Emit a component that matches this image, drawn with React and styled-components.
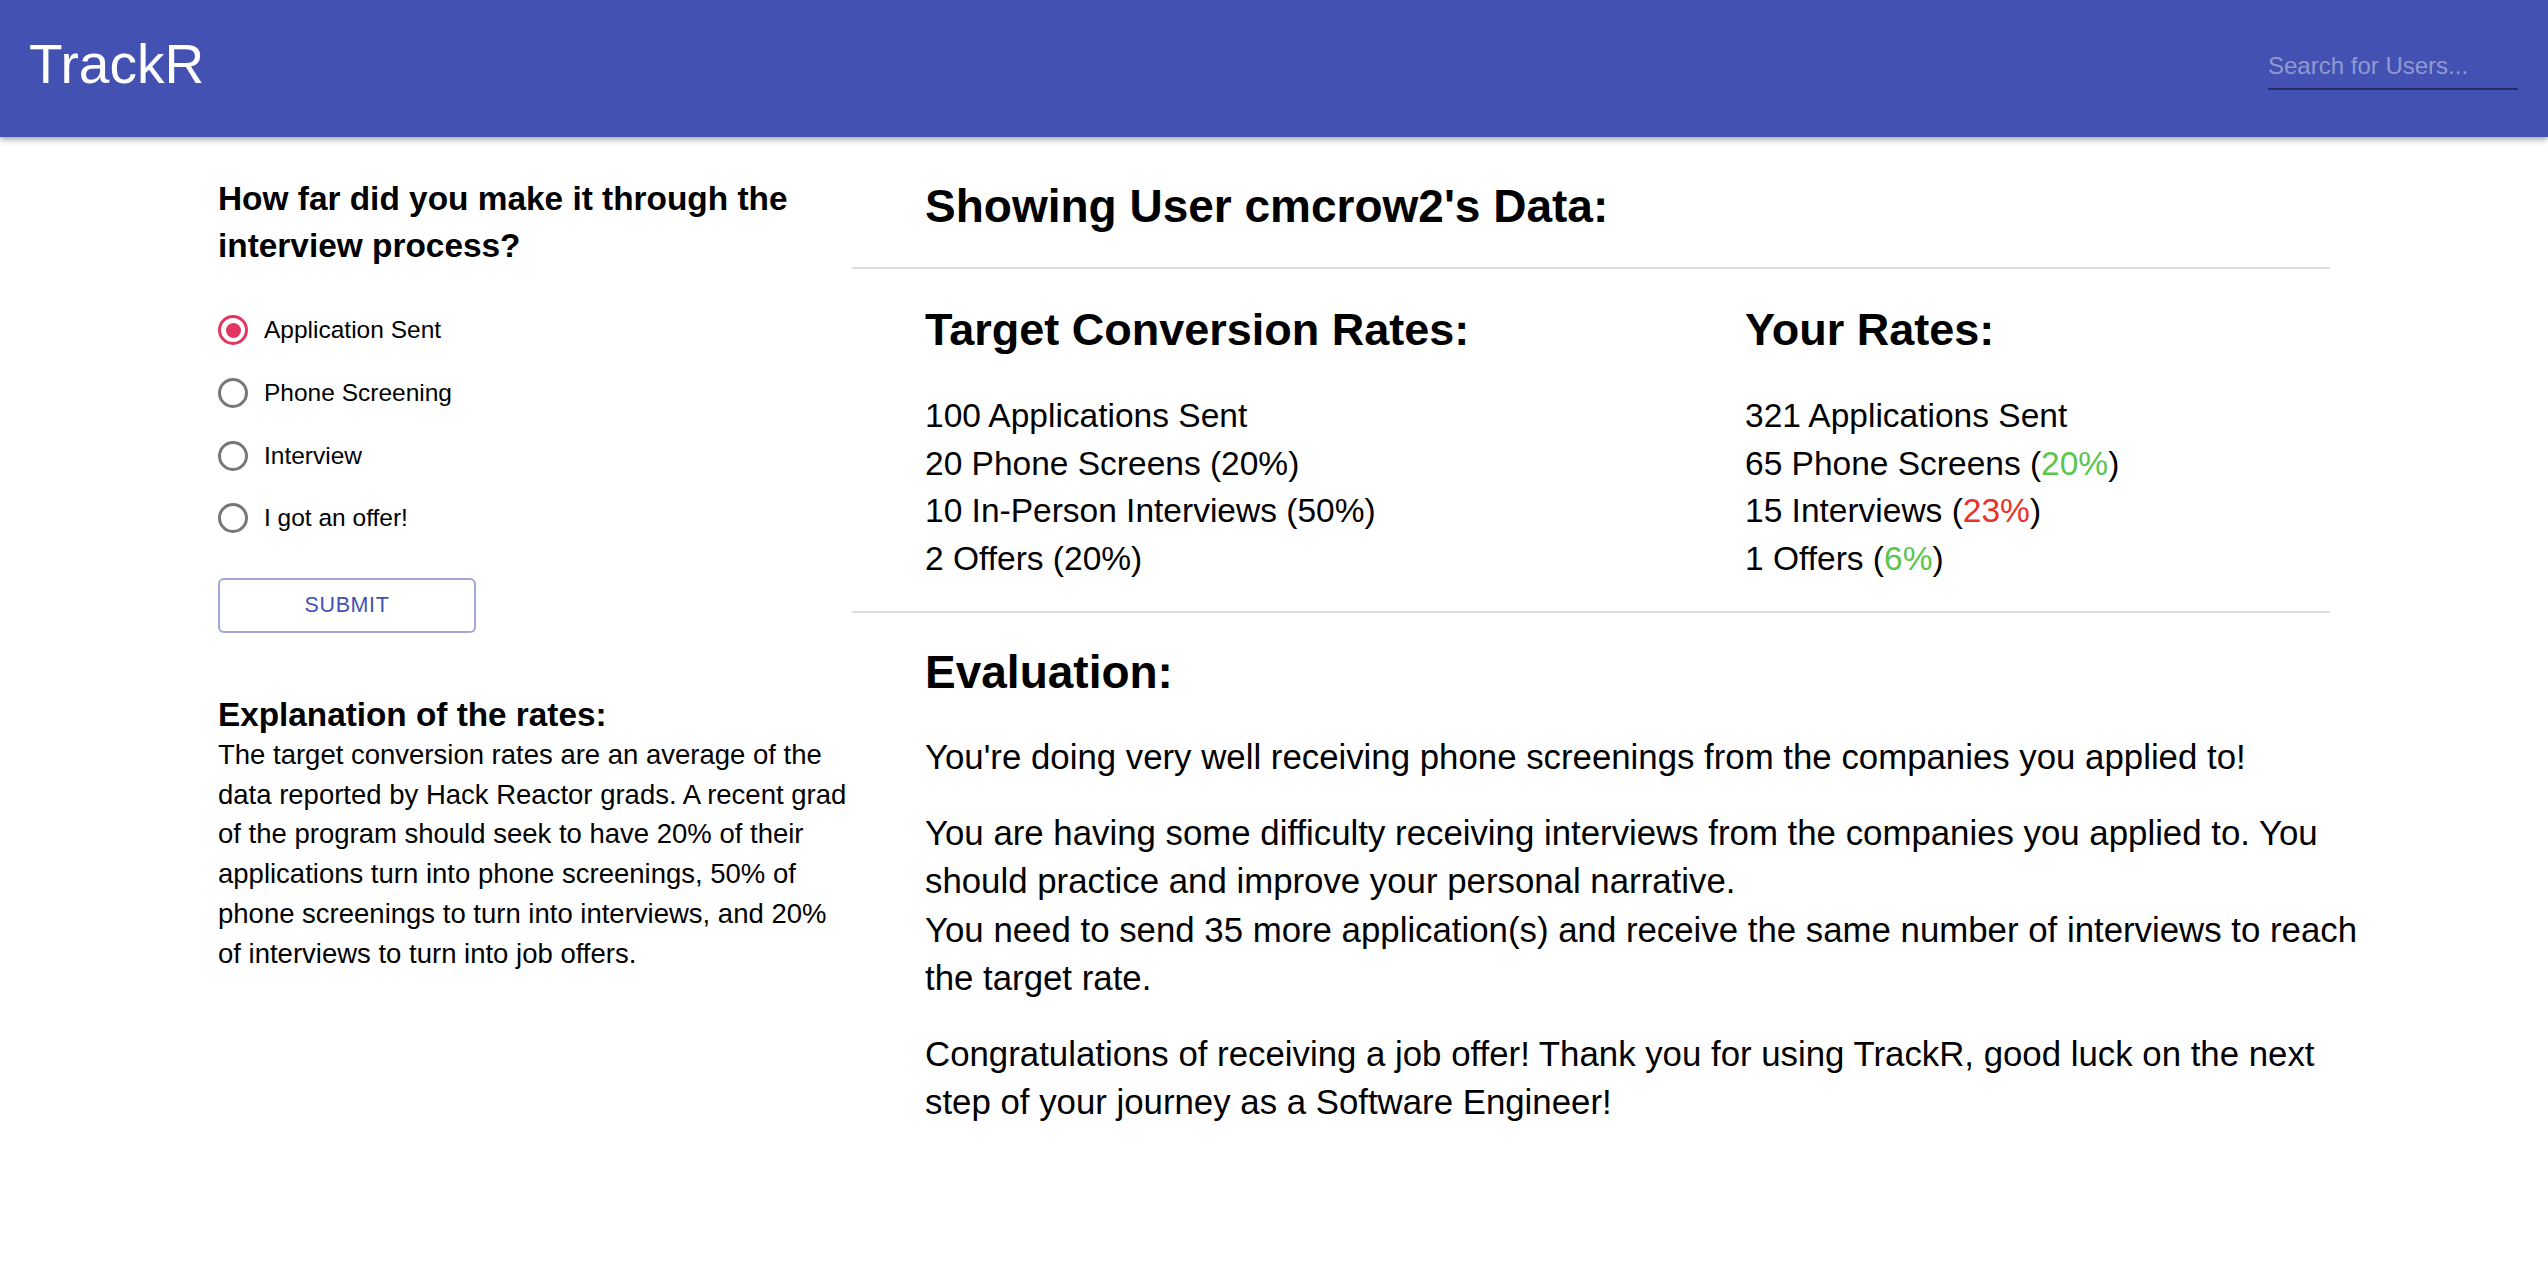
import { useState } from 'react';
import styled, { createGlobalStyle } from 'styled-components';

const GlobalStyle = createGlobalStyle`
  * {
    box-sizing: border-box;
  }
  body {
    margin: 0;
    background: #fff;
    color: #000;
    font-family: "Liberation Sans", Arial, Helvetica, sans-serif;
  }
`;

const AppBar = styled.header`
  position: relative;
  z-index: 1;
  height: 137px;
  display: flex;
  align-items: center;
  justify-content: space-between;
  padding: 0 30px 0 29px;
  background: #4352b2;
  box-shadow: 0 2px 4px -1px rgba(0, 0, 0, 0.2), 0 4px 5px 0 rgba(0, 0, 0, 0.14),
    0 1px 10px 0 rgba(0, 0, 0, 0.12);
`;

const Logo = styled.h1`
  margin: 0 0 9px;
  font-size: 55px;
  font-weight: 400;
  color: #fff;
`;

const SearchInput = styled.input`
  width: 250px;
  margin-top: 4px;
  padding: 0 0 8px;
  border: 0;
  border-bottom: 2px solid rgba(0, 0, 0, 0.42);
  background: transparent;
  font-family: inherit;
  font-size: 24px;
  line-height: 28px;
  color: #fff;
  outline: none;

  &::placeholder {
    color: rgba(255, 255, 255, 0.42);
  }
`;

const Main = styled.main`
  width: 2112px;
  margin: 0 auto;
  display: flex;
`;

const Sidebar = styled.aside`
  width: 634px;
  flex: none;
  padding-top: 38px;
`;

const Question = styled.h2`
  margin: 0;
  font-size: 33.4px;
  font-weight: 700;
  line-height: 47px;
`;

const RadioGroup = styled.div`
  display: flex;
  flex-direction: column;
  margin-top: 30px;
`;

const RadioRow = styled.label`
  height: 62.7px;
  display: flex;
  align-items: center;
  gap: 16px;
  font-size: 24.5px;
  cursor: pointer;
`;

const RadioCircle = styled.span`
  width: 30px;
  height: 30px;
  flex: none;
  display: flex;
  align-items: center;
  justify-content: center;
  border-radius: 50%;
  border: 3px solid ${({ $checked }) => ($checked ? '#e2355f' : '#777')};

  &::after {
    content: '';
    width: 15px;
    height: 15px;
    border-radius: 50%;
    background: ${({ $checked }) => ($checked ? '#e2355f' : 'transparent')};
  }
`;

const HiddenRadio = styled.input`
  display: none;
`;

const SubmitBtn = styled.button`
  width: 258px;
  height: 55px;
  margin-top: 28px;
  border: 2px solid rgba(67, 82, 178, 0.5);
  border-radius: 6px;
  background: #fff;
  color: #4352b2;
  font-family: inherit;
  font-size: 21.5px;
  letter-spacing: 0.6px;
  text-transform: uppercase;
  cursor: pointer;
`;

const SideTitle = styled.h3`
  margin: 62px 0 0;
  font-size: 33.3px;
  font-weight: 700;
  line-height: 40px;
`;

const SideText = styled.p`
  margin: 0;
  font-size: 27.5px;
  line-height: 39.8px;
`;

const Panel = styled.section`
  flex: 1;
  min-width: 0;
`;

const PanelSection = styled.div`
  padding: ${({ $pad }) => $pad};
`;

const Divider = styled.hr`
  margin: 0;
  border: 0;
  height: 2px;
  background: #e0e0e0;
`;

const BigTitle = styled.h2`
  margin: 0;
  font-size: ${({ $size }) => $size || '46px'};
  font-weight: 700;
  line-height: 55px;
`;

const RatesGrid = styled.div`
  display: grid;
  grid-template-columns: 820px 1fr;
`;

const RateList = styled.ul`
  list-style: none;
  margin: 35px 0 0;
  padding: 0;
  font-size: 33.5px;
  line-height: 47.5px;
`;

const Pct = styled.span`
  color: ${({ $good }) => ($good ? '#5bc54e' : '#e8332a')};
`;

const EvalText = styled.div`
  width: 1445px;
  margin-top: 33px;
  font-size: 34.8px;
  line-height: 48.5px;
`;

const EvalPara = styled.p`
  margin: 0 0 27px;
`;

const stages = ['Application Sent', 'Phone Screening', 'Interview', 'I got an offer!'];

const target = [
  '100 Applications Sent',
  '20 Phone Screens (20%)',
  '10 In-Person Interviews (50%)',
  '2 Offers (20%)',
];

const yours = [
  { text: '321 Applications Sent' },
  { text: '65 Phone Screens', pct: '20%', good: true },
  { text: '15 Interviews', pct: '23%', good: false },
  { text: '1 Offers', pct: '6%', good: true },
];

const App = () => {
  const [stage, setStage] = useState(stages[0]);

  return (
    <>
      <GlobalStyle />
      <AppBar>
        <Logo>TrackR</Logo>
        <SearchInput type='text' placeholder='Search for Users...' />
      </AppBar>
      <Main>
        <Sidebar>
          <Question>How far did you make it through the interview process?</Question>
          <RadioGroup>
            {stages.map((s) => (
              <RadioRow key={s}>
                <HiddenRadio
                  type='radio'
                  name='stage'
                  value={s}
                  checked={stage === s}
                  onChange={() => setStage(s)}
                />
                <RadioCircle $checked={stage === s} />
                {s}
              </RadioRow>
            ))}
          </RadioGroup>
          <SubmitBtn>Submit</SubmitBtn>
          <SideTitle>Explanation of the rates:</SideTitle>
          <SideText>
            The target conversion rates are an average of the data reported by Hack Reactor grads. A
            recent grad of the program should seek to have 20% of their applications turn into phone
            screenings, 50% of phone screenings to turn into interviews, and 20% of interviews to
            turn into job offers.
          </SideText>
        </Sidebar>
        <Panel>
          <PanelSection $pad='42px 0 33px 73px'>
            <BigTitle>Showing User cmcrow2's Data:</BigTitle>
          </PanelSection>
          <Divider />
          <PanelSection $pad='33px 0 29px 73px'>
            <RatesGrid>
              <div>
                <BigTitle $size='45px'>Target Conversion Rates:</BigTitle>
                <RateList>
                  {target.map((t) => (
                    <li key={t}>{t}</li>
                  ))}
                </RateList>
              </div>
              <div>
                <BigTitle $size='45px'>Your Rates:</BigTitle>
                <RateList>
                  {yours.map(({ text, pct, good }) => (
                    <li key={text}>
                      {text}
                      {pct && (
                        <>
                          {' ('}
                          <Pct $good={good}>{pct}</Pct>)
                        </>
                      )}
                    </li>
                  ))}
                </RateList>
              </div>
            </RatesGrid>
          </PanelSection>
          <Divider />
          <PanelSection $pad='32px 0 40px 73px'>
            <BigTitle>Evaluation:</BigTitle>
            <EvalText>
              <EvalPara>You're doing very well receiving phone screenings from the companies you applied to!</EvalPara>
              <EvalPara>
                You are having some difficulty receiving interviews from the companies you applied to. You
                should practice and improve your personal narrative.
                <br />
                You need to send 35 more application(s) and receive the same number of interviews to
                reach the target rate.
              </EvalPara>
              <EvalPara>
                Congratulations of receiving a job offer! Thank you for using TrackR, good luck on the next
                step of your journey as a Software Engineer!
              </EvalPara>
            </EvalText>
          </PanelSection>
        </Panel>
      </Main>
    </>
  );
};

export default App;
